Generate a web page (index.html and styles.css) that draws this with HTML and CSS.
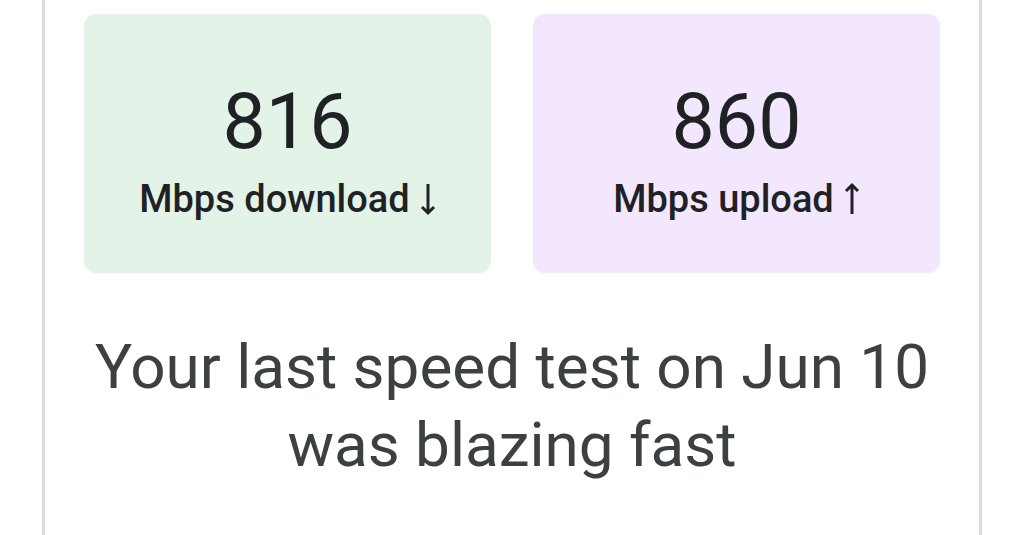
FILE: index.html
```html
<!DOCTYPE html>
<html lang="en">
<head>
  <meta charset="UTF-8">
  <meta name="viewport" content="width=device-width, initial-scale=1.0">
  <title>Speed test</title>
  <link rel="stylesheet" href="styles.css">
</head>
<body>
  <div class="card">
    <div class="stats">
      <div class="stat download">
        <div class="value">816</div>
        <div class="label">Mbps download
          <svg class="arrow" width="16" height="34" viewBox="0 0 16 34"><path d="M8 2V31M2 25L8 31L14 25" fill="none" stroke="#202124" stroke-width="3"/></svg>
        </div>
      </div>
      <div class="stat upload">
        <div class="value">860</div>
        <div class="label">Mbps upload
          <svg class="arrow" width="16" height="34" viewBox="0 0 16 34"><path d="M8 32V3M2 9L8 3L14 9" fill="none" stroke="#202124" stroke-width="3"/></svg>
        </div>
      </div>
    </div>
    <p class="summary">Your last speed test on Jun 10<br>was blazing fast</p>
  </div>
</body>
</html>
```

FILE: styles.css
```css
body {
  margin: 0;
  background: #fff;
  font-family: Roboto, "Noto Sans", sans-serif;
  color: #202124;
}
.card {
  margin-left: 42px;
  width: 940px;
  height: 535px;
  border-left: 3px solid #dadce0;
  border-right: 3px solid #dadce0;
  padding: 14px 39px 0;
  box-sizing: border-box;
}
.stats {
  display: grid;
  grid-template-columns: 1fr 1fr;
  gap: 42px;
}
.stat {
  height: 259px;
  border-radius: 12px;
  display: flex;
  flex-direction: column;
  align-items: center;
  padding-top: 63px;
  box-sizing: border-box;
}
.download { background: #e3f3e8; }
.upload { background: #f2e7fd; }
.value {
  font-size: 77px;
  line-height: 90px;
}
.label {
  font-size: 38px;
  font-weight: 500;
  line-height: 44px;
  margin-top: 10px;
  display: flex;
  align-items: center;
  gap: 10px;
}
.summary {
  margin: 55px 0 0;
  text-align: center;
  font-size: 62px;
  line-height: 78px;
  color: #3c4043;
}
```
